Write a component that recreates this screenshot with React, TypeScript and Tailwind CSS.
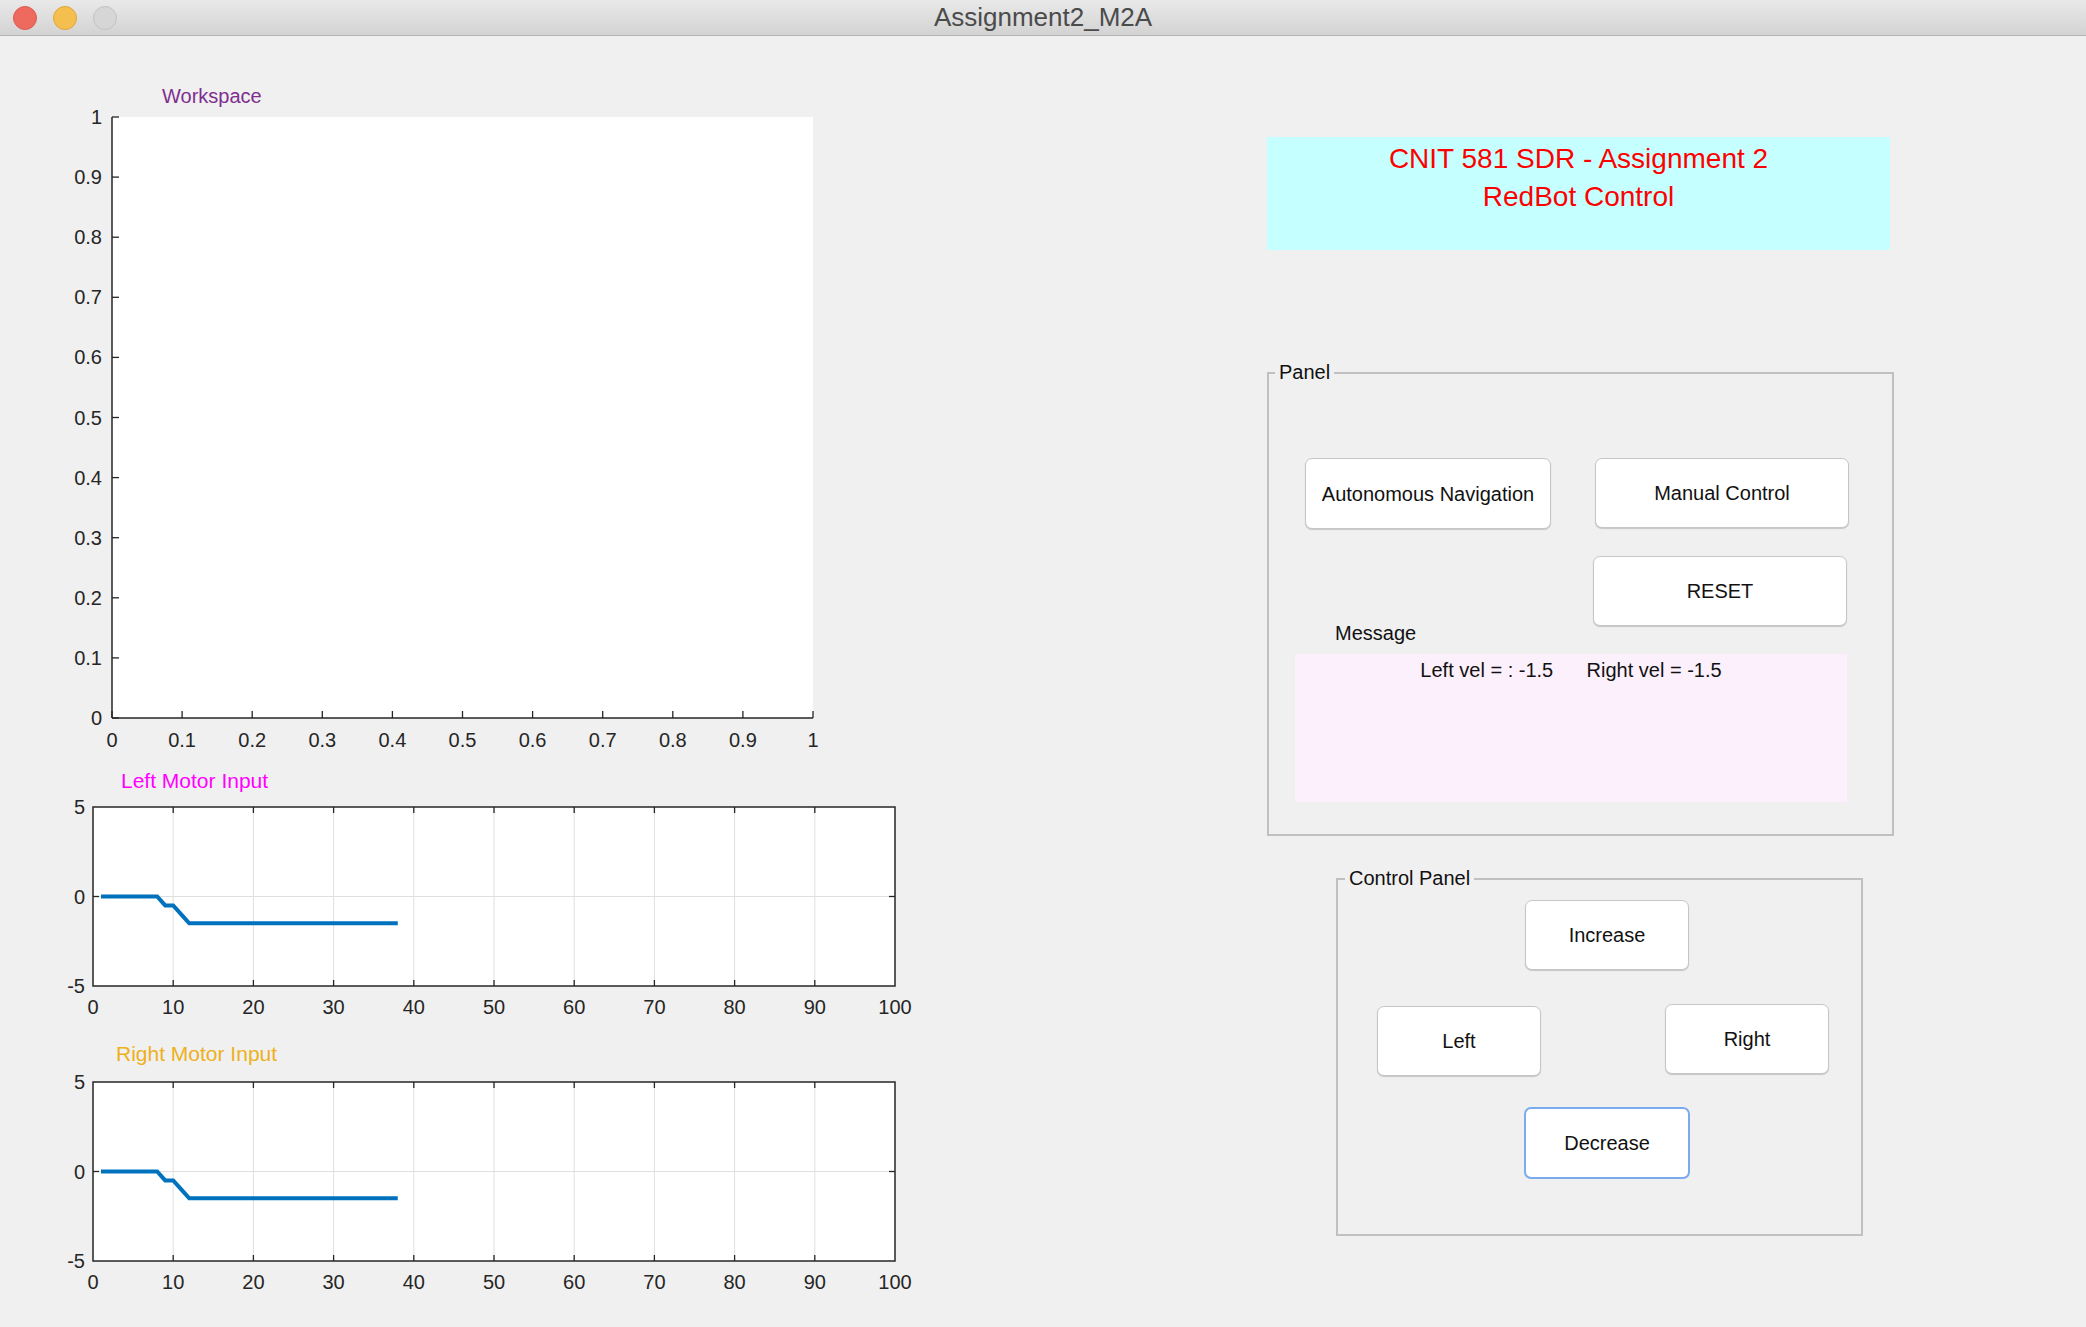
import React from "react";

const FONT = "'Liberation Sans', Arial, sans-serif";

// Motor input data (same for both wheels)
const motorData: number[] = Array.from({ length: 38 }, (_, i) => {
  const x = i + 1;
  if (x <= 8) return 0;
  if (x <= 10) return -0.5;
  if (x === 11) return -1;
  return -1.5;
});

// Workspace axes: only left and bottom lines
const WorkspaceAxes: React.FC = () => {
  const x0 = 112;
  const x1 = 813;
  const y0 = 9; // value 1
  const y1 = 610; // value 0
  const ticks = Array.from({ length: 11 }, (_, i) => i / 10);
  const fmt = (v: number) => (v === 0 ? "0" : v === 1 ? "1" : v.toFixed(1));
  return (
    <svg width={900} height={652} className="block overflow-visible" style={{ fontFamily: FONT }}>
      <rect x={x0} y={y0} width={x1 - x0} height={y1 - y0} fill="#ffffff" />
      <line x1={x0} y1={y0} x2={x0} y2={y1} stroke="#262626" strokeWidth={1.5} />
      <line x1={x0} y1={y1} x2={x1} y2={y1} stroke="#262626" strokeWidth={1.5} />
      {ticks.map((t) => {
        const x = x0 + (x1 - x0) * t;
        const y = y1 - (y1 - y0) * t;
        return (
          <g key={t}>
            <line x1={x} y1={y1} x2={x} y2={y1 - 7} stroke="#262626" strokeWidth={1.3} />
            <line x1={x0} y1={y} x2={x0 + 7} y2={y} stroke="#262626" strokeWidth={1.3} />
            <text x={x} y={y1 + 22} fontSize={20} fill="#262626" textAnchor="middle" dominantBaseline="central">
              {fmt(t)}
            </text>
            <text x={x0 - 10} y={y} fontSize={20} fill="#262626" textAnchor="end" dominantBaseline="central">
              {fmt(t)}
            </text>
          </g>
        );
      })}
    </svg>
  );
};

// Motor input chart with box, grid and blue trace
const MotorChart: React.FC<{ top: number; height: number }> = ({ top, height }) => {
  const x0 = 93;
  const x1 = 895;
  const y0 = top;
  const y1 = top + 179;
  const sx = (v: number) => x0 + ((x1 - x0) * v) / 100;
  const sy = (v: number) => y1 - ((y1 - y0) * (v + 5)) / 10;
  const xt = Array.from({ length: 11 }, (_, i) => i * 10);
  const pts = motorData.map((v, i) => `${sx(i + 1)},${sy(v)}`).join(" ");
  return (
    <svg width={900} height={height} className="block overflow-visible" style={{ fontFamily: FONT }}>
      <rect x={x0} y={y0} width={x1 - x0} height={y1 - y0} fill="#ffffff" />
      {xt.slice(1, 10).map((t) => (
        <line key={t} x1={sx(t)} y1={y0} x2={sx(t)} y2={y1} stroke="#dfdfdf" strokeWidth={1} />
      ))}
      <line x1={x0} y1={sy(0)} x2={x1} y2={sy(0)} stroke="#dfdfdf" strokeWidth={1} />
      {xt.slice(1, 10).map((t) => (
        <g key={t}>
          <line x1={sx(t)} y1={y0} x2={sx(t)} y2={y0 + 6} stroke="#262626" strokeWidth={1.3} />
          <line x1={sx(t)} y1={y1} x2={sx(t)} y2={y1 - 6} stroke="#262626" strokeWidth={1.3} />
        </g>
      ))}
      <line x1={x0} y1={sy(0)} x2={x0 + 6} y2={sy(0)} stroke="#262626" strokeWidth={1.3} />
      <line x1={x1} y1={sy(0)} x2={x1 - 6} y2={sy(0)} stroke="#262626" strokeWidth={1.3} />
      <rect x={x0} y={y0} width={x1 - x0} height={y1 - y0} fill="none" stroke="#262626" strokeWidth={1.5} />
      <polyline points={pts} fill="none" stroke="#0072bd" strokeWidth={4} strokeLinejoin="miter" />
      {xt.map((t) => (
        <text key={t} x={sx(t)} y={y1 + 21} fontSize={20} fill="#262626" textAnchor="middle" dominantBaseline="central">
          {t}
        </text>
      ))}
      {[5, 0, -5].map((v) => (
        <text key={v} x={x0 - 8} y={sy(v)} fontSize={20} fill="#262626" textAnchor="end" dominantBaseline="central">
          {v}
        </text>
      ))}
    </svg>
  );
};

const Btn: React.FC<{ className?: string; focused?: boolean; children: React.ReactNode }> = ({
  className = "",
  focused,
  children,
}) => (
  <button
    className={`${className} flex shrink-0 items-center justify-center rounded-[7px] bg-white text-[20px] text-[#111111] ${
      focused
        ? "border-2 border-[#7aabef]"
        : "border border-[#c6c6c6] shadow-[0_1px_1px_rgba(0,0,0,0.18)]"
    }`}
  >
    {children}
  </button>
);

const App: React.FC = () => {
  return (
    <div className="h-[1327px] w-[2086px] overflow-hidden bg-[#f0f0f0]" style={{ fontFamily: FONT }}>
      {/* Window title bar */}
      <div className="relative flex h-[36px] items-center border-b border-[#b3b3b3] bg-gradient-to-b from-[#e9e9e9] to-[#d3d3d3]">
        <div className="ml-[13px] flex gap-[16px]">
          <span className="h-[24px] w-[24px] rounded-full border border-[#dc5a50] bg-[#ee6a5f]" />
          <span className="h-[24px] w-[24px] rounded-full border border-[#dea73b] bg-[#f5bf4f]" />
          <span className="h-[24px] w-[24px] rounded-full border border-[#c3c3c3] bg-[#d6d6d6]" />
        </div>
        <div className="absolute inset-x-0 top-[2px] text-center text-[26px] leading-[30px] text-[#4b4b4b]">
          Assignment2_M2A
        </div>
      </div>

      <div className="flex">
        {/* Left: plots */}
        <div className="flex w-[1267px] shrink-0 flex-col">
          <div className="pl-[162px] pt-[48px] text-[20px] leading-[24px] text-[#7e2f8e]">Workspace</div>
          <WorkspaceAxes />
          <div className="mt-[9px] pl-[121px] text-[21px] leading-[24px] text-[#ff00ff]">Left Motor Input</div>
          <MotorChart top={14} height={227} />
          <div className="mt-[22px] pl-[116px] text-[21px] leading-[24px] text-[#edb120]">Right Motor Input</div>
          <MotorChart top={16} height={229} />
        </div>

        {/* Right: controls */}
        <div className="flex flex-col">
          <div className="mt-[101px] h-[113px] w-[623px] bg-[#c6ffff] pt-[3px] text-center text-[28px] leading-[38px] text-[#ff0000]">
            <div>CNIT 581 SDR - Assignment 2</div>
            <div>RedBot Control</div>
          </div>

          <div className="relative mt-[122px] flex h-[464px] w-[627px] flex-col border-2 border-[#c0c0c0]">
            <span className="absolute left-[6px] top-[-14px] bg-[#f0f0f0] px-[4px] text-[20px] leading-[24px] text-[#111111]">
              Panel
            </span>
            <div className="ml-[36px] mt-[84px] flex">
              <Btn className="h-[71px] w-[246px]">Autonomous Navigation</Btn>
              <Btn className="ml-[44px] h-[70px] w-[254px]">Manual Control</Btn>
            </div>
            <Btn className="ml-[324px] mt-[27px] h-[70px] w-[254px]">RESET</Btn>
            <div className="ml-[66px] mt-[-1px] text-[20px] leading-[16px] text-[#111111]">Message</div>
            <div className="ml-[26px] mt-[13px] h-[148px] w-[552px] bg-[#fcf0fc] pt-[4px] text-center text-[20px] leading-[24px] text-[#111111] whitespace-pre">
              {"Left vel = : -1.5      Right vel = -1.5"}
            </div>
          </div>

          <div className="relative ml-[69px] mt-[42px] flex h-[358px] w-[527px] flex-col border-2 border-[#c0c0c0]">
            <span className="absolute left-[7px] top-[-14px] bg-[#f0f0f0] px-[4px] text-[20px] leading-[24px] text-[#111111]">
              Control Panel
            </span>
            <Btn className="ml-[187px] mt-[20px] h-[70px] w-[164px]">Increase</Btn>
            <div className="mt-[34px] flex items-start">
              <Btn className="ml-[39px] mt-[2px] h-[70px] w-[164px]">Left</Btn>
              <Btn className="ml-[124px] h-[70px] w-[164px]">Right</Btn>
            </div>
            <Btn focused className="ml-[186px] mt-[31px] h-[72px] w-[166px]">
              Decrease
            </Btn>
          </div>
        </div>
      </div>
    </div>
  );
};

export default App;
